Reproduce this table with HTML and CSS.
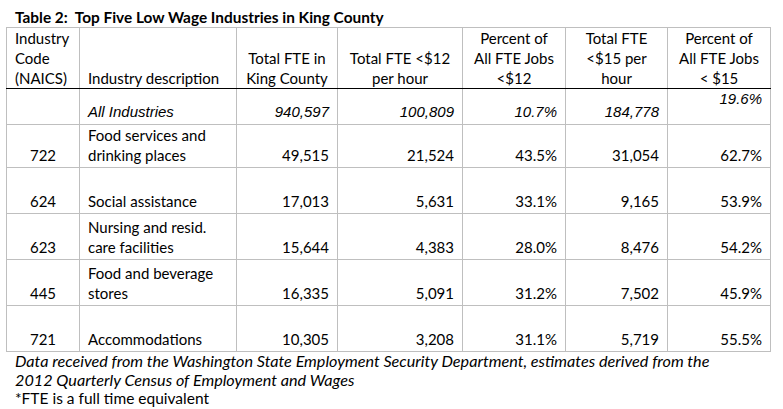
FILE: index.html
```html
<!DOCTYPE html>
<html lang="en">
<head>
<meta charset="utf-8">
<title>Table 2: Top Five Low Wage Industries in King County</title>
<link rel="stylesheet" href="styles.css">
</head>
<body>
<div class="page">
  <div class="title">Table 2:&nbsp; Top Five Low Wage Industries in King County</div>
  <table class="wage-table">
    <colgroup>
      <col class="c-code">
      <col class="c-desc">
      <col class="c-total">
      <col class="c-lt12">
      <col class="c-pct12">
      <col class="c-lt15">
      <col class="c-pct15">
    </colgroup>
    <thead>
      <tr class="head-row">
        <th class="left code-head">Industry<br>Code<br>(NAICS)</th>
        <th class="left">Industry description</th>
        <th>Total FTE in<br>King County</th>
        <th>Total FTE &lt;$12<br>per hour</th>
        <th>Percent of<br>All FTE Jobs<br>&lt;$12</th>
        <th>Total FTE<br>&lt;$15 per<br>hour</th>
        <th>Percent of<br>All FTE Jobs<br>&lt; $15</th>
      </tr>
    </thead>
    <tbody>
      <tr class="all-row">
        <td class="code"></td>
        <td class="desc">All Industries</td>
        <td class="num">940,597</td>
        <td class="num">100,809</td>
        <td class="num">10.7%</td>
        <td class="num">184,778</td>
        <td class="num top">19.6%</td>
      </tr>
      <tr class="row-short">
        <td class="code">722</td>
        <td class="desc">Food services and<br>drinking places</td>
        <td class="num">49,515</td>
        <td class="num">21,524</td>
        <td class="num">43.5%</td>
        <td class="num">31,054</td>
        <td class="num">62.7%</td>
      </tr>
      <tr class="row">
        <td class="code">624</td>
        <td class="desc">Social assistance</td>
        <td class="num">17,013</td>
        <td class="num">5,631</td>
        <td class="num">33.1%</td>
        <td class="num">9,165</td>
        <td class="num">53.9%</td>
      </tr>
      <tr class="row">
        <td class="code">623</td>
        <td class="desc">Nursing and resid.<br>care facilities</td>
        <td class="num">15,644</td>
        <td class="num">4,383</td>
        <td class="num">28.0%</td>
        <td class="num">8,476</td>
        <td class="num">54.2%</td>
      </tr>
      <tr class="row">
        <td class="code">445</td>
        <td class="desc">Food and beverage<br>stores</td>
        <td class="num">16,335</td>
        <td class="num">5,091</td>
        <td class="num">31.2%</td>
        <td class="num">7,502</td>
        <td class="num">45.9%</td>
      </tr>
      <tr class="row">
        <td class="code">721</td>
        <td class="desc">Accommodations</td>
        <td class="num">10,305</td>
        <td class="num">3,208</td>
        <td class="num">31.1%</td>
        <td class="num">5,719</td>
        <td class="num">55.5%</td>
      </tr>
    </tbody>
  </table>
  <div class="notes">
    <p class="source">Data received from the Washington State Employment Security Department, estimates derived from the<br>2012 Quarterly Census of Employment and Wages</p>
    <p class="fte">*FTE is a full time equivalent</p>
  </div>
</div>
</body>
</html>
```

FILE: styles.css
```css
html, body {
  margin: 0;
  padding: 0;
  background: #ffffff;
}

body {
  font-family: "Lato", "Liberation Sans", sans-serif;
  font-size: 15px;
  line-height: 20px;
  color: #000000;
}

.page {
  padding: 7px 0 0 6px;
}

.title {
  font-weight: bold;
  font-size: 15.4px;
  line-height: 20px;
  padding-left: 9px;
}

.wage-table {
  border-collapse: collapse;
  table-layout: fixed;
  width: 764px;
}

.c-code { width: 73px; }
.c-desc { width: 157px; }
.c-total { width: 101px; }
.c-lt12 { width: 125px; }
.c-pct12 { width: 103px; }
.c-lt15 { width: 102px; }
.c-pct15 { width: 103px; }

.wage-table th,
.wage-table td {
  border: 1px solid #bfbfbf;
  padding: 0 8px 2px 8px;
  vertical-align: bottom;
  white-space: nowrap;
}

.wage-table th {
  font-weight: normal;
  text-align: center;
  padding-bottom: 0;
}

.wage-table th.left {
  text-align: left;
}

.head-row th {
  height: 59px;
  border-bottom: 1px solid #000000;
}

.code-head {
  padding-left: 8px;
}

.all-row td {
  height: 33px;
  font-family: "Liberation Sans", Arial, sans-serif;
  font-style: italic;
}

.row-short td {
  height: 40px;
}

.row td {
  height: 43px;
}

.code {
  text-align: center;
}

.desc {
  text-align: left;
}

.num {
  text-align: right;
}

.wage-table td.top {
  vertical-align: top;
  padding-top: 0;
}

.notes {
  padding-left: 9px;
  font-size: 16.2px;
  line-height: 18.7px;
}

.notes p {
  margin: 0;
}

.source {
  font-style: italic;
}

.fte {
  font-size: 15.5px;
}
```
